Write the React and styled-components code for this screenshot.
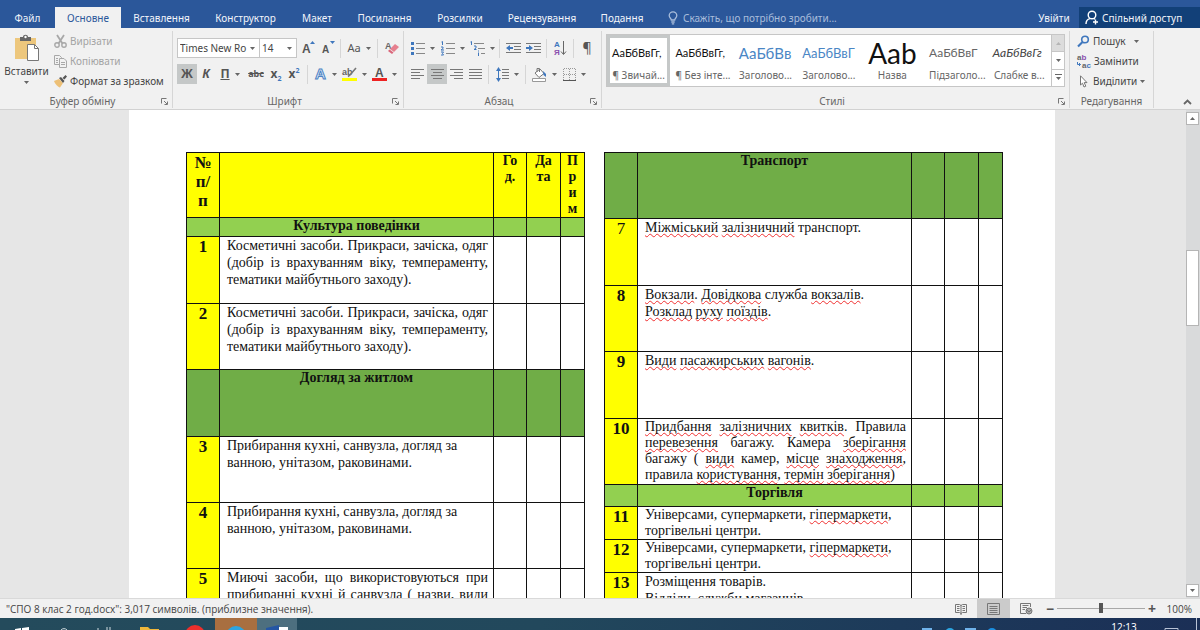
import React, { useState } from "react";
import styled, { createGlobalStyle, css } from "styled-components";

const GlobalStyle = createGlobalStyle`
  * {
    box-sizing: border-box;
  }
  body {
    margin: 0;
    overflow: hidden;
    font-family: "Noto Sans", "Open Sans", sans-serif;
    font-size: 10px;
    color: #444;
  }
  button, input, select {
    font: inherit;
    color: inherit;
    margin: 0;
    padding: 0;
    border: 0;
    background: none;
  }
  svg {
    flex: none;
    overflow: visible;
  }
`;

const Window = styled.div`
  display: flex;
  flex-direction: column;
  height: 100vh;
`;

/* ---------- title / tabs ---------- */

const TabBar = styled.header`
  display: flex;
  align-items: flex-end;
  flex: none;
  height: 28px;
  background: #2b579a;
  color: #f2f5fa;
`;

const Tab = styled.button`
  flex: none;
  width: ${(p) => p.$w}px;
  height: 21px;
  white-space: nowrap;
  ${(p) =>
    p.$active &&
    css`
      background: #f1f1f1;
      color: #2b579a;
    `}
`;

const Search = styled.label`
  display: flex;
  align-items: center;
  flex: 1;
  gap: 5px;
  height: 21px;
  padding-left: 12px;
  color: #a9bddb;

  input {
    flex: 1;
    min-width: 0;
    outline: none;
  }
  input::placeholder {
    color: #a9bddb;
    opacity: 1;
  }
`;

const Share = styled.button`
  display: flex;
  align-items: center;
  flex: none;
  gap: 3px;
  width: 121px;
  height: 21px;
  padding-left: 6px;
  background: #124078;
  white-space: nowrap;
`;

/* ---------- ribbon ---------- */

const Ribbon = styled.section`
  display: flex;
  flex: none;
  height: 82px;
  padding-top: 3px;
  background: #f1f1f1;
  border-bottom: 1px solid #d2d2d2;
`;

const Group = styled.div`
  display: flex;
  flex-direction: column;
  justify-content: space-between;
  flex: ${(p) => (p.$w ? "none" : "1")};
  width: ${(p) => (p.$w ? p.$w + "px" : "auto")};
  min-width: 0;
  height: 77px;
  padding: 0 4px;
  border-right: 1px solid #d6d6d6;
`;

const GroupFoot = styled.div`
  display: flex;
  align-items: center;
  height: 14px;
  line-height: 14px;
  color: #666;
  white-space: nowrap;

  span {
    flex: 1;
    text-align: center;
  }
  button {
    display: flex;
  }
`;

const ClipBody = styled.div`
  display: flex;
  gap: 5px;
`;

const PasteButton = styled.button`
  display: flex;
  flex-direction: column;
  align-items: center;
  gap: 2px;
  width: 45px;
  height: 60px;
  padding-top: 3px;
  line-height: 16px;
  white-space: nowrap;
`;

const Stack = styled.div`
  display: flex;
  flex-direction: column;
`;

const SmallButton = styled.button`
  display: flex;
  align-items: center;
  gap: 3px;
  height: 20px;
  white-space: nowrap;
  color: ${(p) => (p.$off ? "#a3a3a3" : "#444")};
`;

const Rows = styled.div`
  display: flex;
  flex-direction: column;
  gap: 6px;
  padding-top: 7px;
`;

const ToolRow = styled.div`
  display: flex;
  align-items: center;
  height: 20px;
`;

const Tool = styled.button`
  display: flex;
  align-items: center;
  justify-content: center;
  flex: none;
  gap: 5px;
  width: ${(p) => p.$w}px;
  height: 20px;
  background: ${(p) => (p.$active ? "#c5c8c8" : "none")};
`;

const Sep = styled.i`
  flex: none;
  width: 1px;
  height: 19px;
  margin: 0 ${(p) => p.$gap || 3}px;
  background: #d6d6d6;
`;

const Combo = styled.label`
  display: flex;
  align-items: center;
  flex: none;
  width: ${(p) => p.$w}px;
  height: 20px;
  padding: 0 4px 0 2px;
  background: #fff;
  border: 1px solid #c6c6c6;

  & + & {
    border-left: 0;
  }
  select {
    flex: 1;
    min-width: 0;
    appearance: none;
    outline: none;
  }
`;

const Glyph = styled.span`
  font-size: ${(p) => p.$size || 13}px;
  line-height: 16px;
  font-weight: ${(p) => (p.$bold ? 700 : 400)};
  font-style: ${(p) => (p.$italic ? "italic" : "normal")};
  text-decoration: ${(p) => p.$line || "none"};
  color: #555;

  sub, sup {
    font-size: 7px;
    line-height: 1px;
    color: #3f77bd;
  }
`;

/* ---------- styles gallery ---------- */

const Gallery = styled.div`
  display: flex;
  height: 53px;
  margin-top: 3px;
  background: #fff;
  border: 1px solid #c6c6c6;
`;

const StyleList = styled.div`
  display: flex;
  flex: 1;
  min-width: 0;
  overflow: hidden;
`;

const StyleItem = styled.button`
  display: flex;
  flex-direction: column;
  flex: 1 0 0;
  min-width: 0;
  height: 51px;
  padding: 0 2px;
  border: 3px solid ${(p) => (p.$active ? "#c5c8c8" : "transparent")};
`;

const Sample = styled.span`
  display: flex;
  align-items: center;
  justify-content: ${(p) => (p.$center ? "center" : "flex-start")};
  width: 100%;
  height: 30px;
  white-space: nowrap;
  font-family: Lato, "Noto Sans", sans-serif;
  font-size: ${(p) => p.$size || 11}px;
  line-height: 30px;
  font-style: ${(p) => (p.$italic ? "italic" : "normal")};
  color: ${(p) => p.$color || "#111"};
`;

const StyleName = styled.span`
  width: 100%;
  line-height: 14px;
  text-align: center;
  white-space: nowrap;
  color: #666;
`;

const GalleryScroll = styled.div`
  display: flex;
  flex-direction: column;
  width: 13px;

  button {
    display: flex;
    align-items: center;
    justify-content: center;
    flex: 1;
    border-left: 1px solid #c6c6c6;
    border-bottom: 1px solid #c6c6c6;
  }
  button:first-child {
    background: #dcdcdc;
  }
  button:last-child {
    border-bottom: 0;
  }
`;

const EditBody = styled(Stack)`
  padding-left: 3px;
`;

const Collapse = styled.button`
  display: flex;
  align-items: flex-end;
  justify-content: flex-end;
  flex: none;
  width: 46px;
  height: 77px;
  padding: 0 8px 3px 0;
`;

/* ---------- document ---------- */

const Workspace = styled.main`
  display: flex;
  flex: 1;
  min-height: 0;
  background: #e6e6e6;
`;

const Canvas = styled.div`
  display: flex;
  justify-content: center;
  flex: 1;
  padding-right: 2px;
  overflow: hidden;
`;

const Page = styled.article`
  display: flex;
  align-items: flex-start;
  gap: 19px;
  width: 926px;
  padding: 42px 52px 0 57px;
  background: #fff;
`;

const Grid = styled.table`
  flex: 1;
  table-layout: fixed;
  border-collapse: collapse;
  font-family: "Liberation Serif", "Times New Roman", serif;
  font-size: 14px;
  line-height: 16px;
  color: #111;

  td, th {
    padding: 0;
    border: 1px solid #111;
    vertical-align: top;
    font-weight: 700;
    text-align: center;
  }
`;

const Row = styled.tr`
  height: ${(p) => p.$h}px;
  background: ${(p) => p.$bg || "#fff"};
`;

const Num = styled.td`
  && {
    background: #ff0;
    font-size: 17px;
    line-height: 19px;
    font-weight: ${(p) => (p.$light ? 400 : 700)};
  }
`;

const Body = styled.td`
  && {
    padding: 0 5px 0 7px;
    line-height: ${(p) => (p.$tight ? 16 : 17)}px;
    font-weight: 400;
    text-align: left;
  }
`;

const Line = styled.div`
  white-space: nowrap;
  text-align-last: ${(p) => (p.$fill ? "justify" : "left")};
`;

const Err = styled.span`
  text-decoration: underline wavy #f03030 1px;
  text-underline-offset: 1px;
  text-decoration-skip-ink: none;
`;

const Scroll = styled.div`
  display: flex;
  flex-direction: column;
  align-items: stretch;
  flex: none;
  width: 14px;
  padding: 2px 1px 1px 0;
  background: #d9dadb;

  button {
    display: flex;
    align-items: center;
    justify-content: center;
    height: 13px;
    background: #fff;
    border: 1px solid #b5b5b5;
  }
`;

const ScrollTrack = styled.div`
  flex: 1;
  padding-top: 125px;
`;

const ScrollThumb = styled.div`
  height: 76px;
  background: #fff;
  border: 1px solid #b5b5b5;
`;

/* ---------- status bar and taskbar ---------- */

const StatusBar = styled.footer`
  display: flex;
  align-items: center;
  flex: none;
  height: 20px;
  padding: 0 8px 0 6px;
  background: #f1f1f1;
  border-top: 1px solid #d9d9d9;
  white-space: nowrap;
  font-family: "Open Sans", "Noto Sans", sans-serif;

  p {
    flex: 1;
    margin: 0;
  }
`;

const ViewButton = styled.button`
  display: flex;
  align-items: center;
  justify-content: center;
  width: 33px;
  height: 19px;
  background: ${(p) => (p.$active ? "#cbcbcb" : "none")};
`;

const ZoomStep = styled.button`
  width: 14px;
  font-size: 14px;
  line-height: 16px;
  font-weight: 700;
  color: #555;
`;

const ZoomSlider = styled.input`
  appearance: none;
  width: 88px;
  height: 12px;
  outline: none;

  &::-webkit-slider-runnable-track {
    height: 1px;
    background: #a8a8a8;
  }
  &::-webkit-slider-thumb {
    appearance: none;
    width: 4px;
    height: 10px;
    margin-top: -5px;
    background: #555;
  }
`;

const ZoomValue = styled.span`
  width: 33px;
  text-align: right;
`;

const Taskbar = styled.nav`
  display: flex;
  flex: none;
  height: 12px;
  overflow: hidden;
  background: linear-gradient(90deg, #244b5c 0%, #22485c 45%, #1d3a5a 75%, #1b2f56 100%);
  color: #fff;
`;

const TaskItem = styled.button`
  display: flex;
  align-items: flex-start;
  justify-content: center;
  flex: none;
  width: ${(p) => p.$w}px;
  height: 12px;
  background: ${(p) => p.$bg || "none"};
`;

const Tray = styled.div`
  display: flex;
  justify-content: flex-end;
  flex: 1;
`;

const Clock = styled.time`
  width: 64px;
  padding-top: 1px;
  font-size: 10px;
  line-height: 16px;
  text-align: center;
`;

/* ---------- icons ---------- */

const Caret = ({ up, light }) => (
  <svg width="5" height="3" viewBox="0 0 5 3">
    <path d={up ? "M0 3L2.5 0L5 3Z" : "M0 0L2.5 3L5 0Z"} fill={light ? "#b5b5b5" : "#666"} />
  </svg>
);

const MoreCaret = () => (
  <svg width="7" height="7" viewBox="0 0 7 7">
    <path d="M0 .5H7" stroke="#666" />
    <path d="M1 3L3.5 6L6 3Z" fill="#666" />
  </svg>
);

const Launcher = () => (
  <svg width="7" height="7" viewBox="0 0 7 7" fill="none" stroke="#777">
    <path d="M.5 5.5V.5H5.5M3 3L6 6M6.5 3.5V6.5H3.5" />
  </svg>
);

const BulbIcon = () => (
  <svg width="10" height="14" viewBox="0 0 10 14" fill="none" stroke="#a9bddb" strokeWidth="1.3">
    <path d="M3.3 9C3.3 7.5 1.2 6.8 1.2 4.4A3.8 3.6 0 0 1 8.8 4.4C8.8 6.8 6.7 7.5 6.7 9ZM3.3 11H6.7M3.8 12.8H6.2" />
  </svg>
);

const PersonIcon = () => (
  <svg width="14" height="15" viewBox="0 0 14 15" fill="none" stroke="#fff" strokeWidth="1.4">
    <circle cx="7" cy="5" r="3.8" />
    <path d="M1 14C1 11 3 9 5 8.6M9 8.5L10 9M10.5 9.5V14.5M8 12H13" />
  </svg>
);

const PasteIcon = () => (
  <svg width="26" height="27" viewBox="0 0 26 27">
    <path d="M1 4H22V25H1Z" fill="#edc77d" />
    <path d="M6 3H9C9 0 14 0 14 3H17V7H6Z" fill="#666" />
    <circle cx="11.5" cy="3" r="1.2" fill="#fff" />
    <path d="M13.5 10.5H20.5L24.5 14.5V26.5H13.5Z" fill="#fff" stroke="#777" />
    <path d="M20.5 10.5V14.5H24.5" fill="none" stroke="#777" />
  </svg>
);

const CutIcon = () => (
  <svg width="13" height="13" viewBox="0 0 13 13" fill="none" stroke="#a8a8a8" strokeWidth="1.4">
    <path d="M3 0L8.5 8.5M10 0L4.5 8.5" strokeWidth="1.8" />
    <circle cx="3" cy="10" r="2.2" />
    <circle cx="10" cy="10" r="2.2" />
  </svg>
);

const CopyIcon = () => (
  <svg width="13" height="13" viewBox="0 0 13 13" fill="#f1f1f1" stroke="#a8a8a8">
    <path d="M.5.5H5.5L7.5 2.5V9.5H.5ZM2 3.5H4M2 5.5H4M2 7.5H4" />
    <path d="M5.5 3.5H10L12.5 6V12.5H5.5ZM7 7.5H11M7 9.5H11" />
  </svg>
);

const BrushIcon = () => (
  <svg width="13" height="13" viewBox="0 0 13 13">
    <path d="M0 6L5 4L9 8L6 12.5C4 12 1 9 0 6Z" fill="#edc077" />
    <path d="M5 3L7 2L10.5 6L9 8ZM8.5 3L11.5 0L13 1.5L10.5 4.5Z" fill="#555" />
  </svg>
);

const LetterSvg = styled.svg`
  font-family: "Liberation Sans", sans-serif;
`;

const GrowIcon = ({ down }) => (
  <LetterSvg width="13" height="16" viewBox="0 0 13 16">
    <text x="0" y="13" fontSize={down ? 10 : 12} fontWeight="600" fill="#555">A</text>
    <path d={down ? "M8 1H13L10.5 4Z" : "M8 4H13L10.5 1Z"} fill="#3f77bd" />
  </LetterSvg>
);

const EraserIcon = () => (
  <LetterSvg width="14" height="16" viewBox="0 0 14 16">
    <text x="0" y="9" fontSize="9" fontWeight="600" fill="#666">A</text>
    <path d="M10 4L14 7L9 12L5 9Z" fill="#e6808f" />
    <path d="M4.5 9.5L8.5 12.5L7 14L3 11Z" fill="#d9667a" />
  </LetterSvg>
);

const OutlineAIcon = () => (
  <LetterSvg width="13" height="18" viewBox="0 0 13 18">
    <text
      x="1"
      y="14"
      fontSize="15"
      fontWeight="700"
      fill="#e8f1fb"
      stroke="#4c82c3"
      strokeWidth="1"
    >
      A
    </text>
  </LetterSvg>
);

const HighlightIcon = () => (
  <LetterSvg width="15" height="16" viewBox="0 0 15 16">
    <text x="0" y="9" fontSize="9" fontWeight="700" fill="#666">ab</text>
    <path d="M14 2L8 9L6 10.5" stroke="#777" strokeWidth="1.6" fill="none" />
    <path d="M0 12H15V15H0Z" fill="#ffff00" />
  </LetterSvg>
);

const ColorIcon = () => (
  <LetterSvg width="15" height="16" viewBox="0 0 15 16">
    <text x="3" y="11" fontSize="12" fontWeight="700" fill="#555">A</text>
    <path d="M0 12H15V15H0Z" fill="#ee2222" />
  </LetterSvg>
);

const ListIcon = ({ kind }) => (
  <svg width="14" height="15" viewBox="0 0 14 15">
    {kind === "dots" &&
      [2, 7, 12].map((y) => <rect key={y} x="0" y={y - 1} width="3" height="3" fill="#3f77bd" />)}
    {kind === "nums" && (
      <path d="M.5 1L1.5.5V4M0 6H2V7.5L0 9H3M0 11H2.5L1.5 12.5L2.5 14H0" stroke="#3f77bd" fill="none" />
    )}
    <path d="M5 2.5H14M5 7.5H14M5 12.5H14" stroke="#888" />
  </svg>
);

const MultiIcon = () => (
  <svg width="15" height="15" viewBox="0 0 15 15" fill="none">
    <path d="M.5 1L1.5.5V4M4 5H6V7L4 8.5H6.5M8.5 9.5V10.5M8.5 11.5V15" stroke="#3f77bd" />
    <path d="M4 2.5H14M8 7.5H15M11 12.5H15" stroke="#888" />
  </svg>
);

const IndentIcon = ({ right }) => (
  <svg width="15" height="13" viewBox="0 0 15 13">
    <path d="M0 1.5H15M8 4.5H15M8 7.5H15M0 10.5H15" stroke="#777" />
    <path
      d={right ? "M0 5H3V3L7 6L3 9V7H0Z" : "M7 5H4V3L0 6L4 9V7H7Z"}
      fill="#3f77bd"
    />
  </svg>
);

const SortIcon = () => (
  <LetterSvg width="13" height="18" viewBox="0 0 13 18" fontSize="8" fontWeight="700">
    <text x="0" y="8" fill="#3f77bd">А</text>
    <text x="0" y="16" fill="#8a4fae">Я</text>
    <path d="M9.5 2V15M7 12.5L9.5 15.5L12 12.5" fill="none" stroke="#666" />
  </LetterSvg>
);

const AlignIcon = ({ kind }) => {
  const d = {
    left: "M0 .5H13M0 3.5H9M0 6.5H13M0 9.5H9",
    center: "M0 .5H13M2 3.5H11M0 6.5H13M2 9.5H11",
    right: "M0 .5H13M4 3.5H13M0 6.5H13M4 9.5H13",
    full: "M0 .5H13M0 3.5H13M0 6.5H13M0 9.5H13",
  };
  return (
    <svg width="13" height="10" viewBox="0 0 13 10">
      <path d={d[kind]} stroke="#777" />
    </svg>
  );
};

const SpacingIcon = () => (
  <svg width="13" height="15" viewBox="0 0 13 15">
    <path d="M2.5 3V12" stroke="#3f77bd" />
    <path d="M0 4L2.5 0L5 4ZM0 11L2.5 15L5 11Z" fill="#3f77bd" />
    <path d="M6 2.5H13M6 5.5H13M6 8.5H13M6 11.5H13" stroke="#777" />
  </svg>
);

const BucketIcon = () => (
  <svg width="15" height="15" viewBox="0 0 15 15">
    <path d="M3 6L8 2L12 6.5L7 10.5Z" fill="#fff" stroke="#777" />
    <path d="M5 5V1.5H7.5V5" fill="none" stroke="#777" />
    <path d="M11 4L14 7V10L11.5 8Z" fill="#3f77bd" />
    <path d="M.5 11.5H13.5V14.5H.5Z" fill="#fff" stroke="#999" />
  </svg>
);

const BordersIcon = () => (
  <svg width="13" height="13" viewBox="0 0 13 13" fill="none">
    <path d="M.5 12V.5H12.5V12M6.5 1V12M1 6.5H12" stroke="#999" strokeDasharray="1 1" />
    <path d="M0 12.5H13" stroke="#555" />
  </svg>
);

const FindIcon = () => (
  <svg width="13" height="13" viewBox="0 0 13 13" fill="none" stroke="#3f77bd">
    <circle cx="8" cy="4.5" r="3.3" strokeWidth="1.6" />
    <path d="M5.5 7L1 11.5" strokeWidth="2.2" />
  </svg>
);

const ReplaceIcon = () => (
  <LetterSvg width="14" height="18" viewBox="0 0 14 18" fontWeight="700" fontSize="8">
    <text x="0" y="8" fill="#666">a<tspan fill="#8a4fae">b</tspan></text>
    <text x="5" y="16" fill="#666">a<tspan fill="#3f77bd">c</tspan></text>
    <path d="M.5 10V12.5H3.5M2 11L3.5 12.5L2 14" fill="none" stroke="#3f77bd" />
  </LetterSvg>
);

const PointerIcon = () => (
  <svg width="13" height="13" viewBox="0 0 13 13">
    <path d="M3.5.8V10L5.5 8.2L7 12L8.8 11.2L7.2 7.6H10Z" fill="#fff" stroke="#777" />
  </svg>
);

const ReadIcon = () => (
  <svg width="12" height="12" viewBox="0 0 12 12" fill="none" stroke="#777">
    <path d="M.5 1.5H4.5L6 2.5L7.5 1.5H11.5V9.5H7.5L6 10.5L4.5 9.5H.5ZM6 2V12M2 3.5H4.5M2 5.5H4.5M2 7.5H4.5M7.5 3.5H10M7.5 5.5H10M7.5 7.5H10" />
  </svg>
);

const PrintIcon = () => (
  <svg width="13" height="12" viewBox="0 0 13 12" fill="none" stroke="#777">
    <path d="M.5.5H12.5V11.5H.5ZM2.5 3.5H10.5M2.5 5.5H10.5M2.5 7.5H10.5M2.5 9.5H10.5" />
  </svg>
);

const WebIcon = () => (
  <svg width="13" height="12" viewBox="0 0 13 12" fill="none" stroke="#777">
    <path d="M6 10.5H.5V.5H10.5V4M2.5 2.5H8.5M2.5 4.5H7M2.5 6.5H5" />
    <circle cx="9" cy="8" r="3" fill="#aaa" />
    <path d="M7 7L9 9L11 7" />
  </svg>
);

/* ---------- data ---------- */

const tabs = [
  ["Файл", 55],
  ["Основне", 66],
  ["Вставлення", 81],
  ["Конструктор", 87],
  ["Макет", 56],
  ["Посилання", 79],
  ["Розсилки", 72],
  ["Рецензування", 92],
  ["Подання", 68],
];

const gallery = [
  { name: "¶ Звичай...", text: "АаБбВвГг,", active: true },
  { name: "¶ Без інте...", text: "АаБбВвГг," },
  { name: "Заголово...", text: "АаБбВв", size: 15, color: "#4a86c5" },
  { name: "Заголово...", text: "АаБбВвГ", size: 13, color: "#4a86c5" },
  { name: "Назва", text: "Ааb", size: 28, center: true },
  { name: "Підзаголо...", text: "АаБбВвГ", size: 12, color: "#666" },
  { name: "Слабке в...", text: "АаБбВвГг", size: 12, color: "#444", italic: true },
];

const YELLOW = "#ffff00";
const GREEN = "#70ad47";
const LIME = "#92d050";

const Col = styled.col`
  width: ${(p) => p.$w}px;
`;

const Cols = () => (
  <colgroup>
    <Col $w={33} />
    <col />
    <Col $w={33} />
    <Col $w={34} />
    <Col $w={24} />
  </colgroup>
);

const Empty = () => (
  <>
    <td />
    <td />
    <td />
  </>
);

const Section = ({ title, h, bg }) => (
  <Row $h={h} $bg={bg}>
    <td />
    <th>{title}</th>
    <Empty />
  </Row>
);

const Lesson = ({ n, h, light, tight, children }) => (
  <Row $h={h}>
    <Num $light={light}>{n}</Num>
    <Body $tight={tight}>{children}</Body>
    <Empty />
  </Row>
);

const Foot = ({ children, launcher = true }) => (
  <GroupFoot>
    <span>{children}</span>
    {launcher && (
      <button aria-label={children}>
        <Launcher />
      </button>
    )}
  </GroupFoot>
);

const LeftTable = () => (
  <Grid>
    <Cols />
    <tbody>
      <Row $h={65} $bg={YELLOW}>
        <Num>№<br />п/<br />п</Num>
        <th />
        <th>Го<br />д.</th>
        <th>Да<br />та</th>
        <th>П<br />р<br />и<br />м</th>
      </Row>
      <Section title="Культура поведінки" h={19} bg={LIME} />
      {[1, 2].map((n) => (
        <Lesson key={n} n={n} h={n === 1 ? 67 : 66}>
          <Line $fill>Косметичні засоби. Прикраси, зачіска, одяг</Line>
          <Line $fill>(добір із врахуванням віку, темпераменту,</Line>
          <Line>тематики майбутнього заходу).</Line>
        </Lesson>
      ))}
      <Section title="Догляд за житлом" h={67} bg={GREEN} />
      {[3, 4].map((n) => (
        <Lesson key={n} n={n} h={66}>
          <Line>Прибирання кухні, санвузла, догляд за</Line>
          <Line>ванною, унітазом, раковинами.</Line>
        </Lesson>
      ))}
      <Lesson n={5} h={66}>
        <Line $fill>Миючі засоби, що використовуються при</Line>
        <Line $fill>прибиранні кухні й санвузла ( назви, види</Line>
      </Lesson>
    </tbody>
  </Grid>
);

const RightTable = () => (
  <Grid>
    <Cols />
    <tbody>
      <Section title="Транспорт" h={66} bg={GREEN} />
      <Lesson n={7} h={67} light>
        <Line><Err>Міжміський</Err> <Err>залізничний</Err> транспорт.</Line>
      </Lesson>
      <Lesson n={8} h={66}>
        <Line><Err>Вокзали</Err>. <Err>Довідкова</Err> служба <Err>вокзалів</Err>.</Line>
        <Line><Err>Розклад</Err> <Err>руху</Err> <Err>поїздів</Err>.</Line>
      </Lesson>
      <Lesson n={9} h={67}>
        <Line><Err>Види</Err> <Err>пасажирських</Err> <Err>вагонів</Err>.</Line>
      </Lesson>
      <Lesson n={10} h={66} tight>
        <Line $fill><Err>Придбання</Err> <Err>залізничних</Err> <Err>квитків</Err>. Правила</Line>
        <Line $fill><Err>перевезення</Err> багажу. Камера <Err>зберігання</Err></Line>
        <Line $fill>багажу ( <Err>види</Err> камер, <Err>місце</Err> <Err>знаходження</Err>,</Line>
        <Line>правила <Err>користування</Err>, <Err>термін</Err> <Err>зберігання</Err>)</Line>
      </Lesson>
      <Section title="Торгівля" h={22} bg={LIME} />
      {[11, 12].map((n) => (
        <Lesson key={n} n={n} h={33} tight>
          <Line>Універсами, супермаркети, <Err>гіпермаркети</Err>,</Line>
          <Line>торгівельні центри.</Line>
        </Lesson>
      ))}
      <Lesson n={13} h={66}>
        <Line>Розміщення товарів.</Line>
        <Line>Відділи, служби магазинів.</Line>
      </Lesson>
    </tbody>
  </Grid>
);

const App = () => {
  const [tab, setTab] = useState("Основне");
  const [zoom, setZoom] = useState(50);

  return (
    <Window>
      <GlobalStyle />
      <TabBar>
        {tabs.map(([name, w]) => (
          <Tab key={name} $w={w} $active={name === tab} onClick={() => setTab(name)}>
            {name}
          </Tab>
        ))}
        <Search>
          <BulbIcon />
          <input aria-label="Пошук команд" placeholder="Скажіть, що потрібно зробити..." />
        </Search>
        <Tab $w={50}>Увійти</Tab>
        <Share>
          <PersonIcon />
          Спільний доступ
        </Share>
      </TabBar>

      <Ribbon>
        <Group $w={173}>
          <ClipBody>
            <PasteButton>
              <PasteIcon />
              Вставити
              <Caret />
            </PasteButton>
            <Stack>
              <SmallButton $off><CutIcon />Вирізати</SmallButton>
              <SmallButton $off><CopyIcon />Копіювати</SmallButton>
              <SmallButton><BrushIcon />Формат за зразком</SmallButton>
            </Stack>
          </ClipBody>
          <Foot>Буфер обміну</Foot>
        </Group>

        <Group $w={231}>
          <Rows>
            <ToolRow>
              <Combo $w={83}>
                <select aria-label="Шрифт"><option>Times New Ro</option></select>
                <Caret />
              </Combo>
              <Combo $w={37}>
                <select aria-label="Розмір"><option>14</option></select>
                <Caret />
              </Combo>
              <Tool $w={22}><GrowIcon /></Tool>
              <Tool $w={18}><GrowIcon down /></Tool>
              <Sep />
              <Tool $w={30}><Glyph $size={11}>Aa</Glyph><Caret /></Tool>
              <Sep />
              <Tool $w={22}><EraserIcon /></Tool>
            </ToolRow>
            <ToolRow>
              <Tool $w={20} $active><Glyph $bold $size={12}>Ж</Glyph></Tool>
              <Tool $w={18}><Glyph $bold $italic $size={12}>К</Glyph></Tool>
              <Tool $w={30}><Glyph $bold $size={12} $line="underline">П</Glyph><Caret /></Tool>
              <Tool $w={22}><Glyph $bold $size={9} $line="line-through">abc</Glyph></Tool>
              <Tool $w={18}><Glyph $bold $size={12}>x<sub>2</sub></Glyph></Tool>
              <Tool $w={18}><Glyph $bold $size={12}>x<sup>2</sup></Glyph></Tool>
              <Sep $gap={4} />
              <Tool $w={27}><OutlineAIcon /><Caret /></Tool>
              <Tool $w={31}><HighlightIcon /><Caret /></Tool>
              <Tool $w={28}><ColorIcon /><Caret /></Tool>
            </ToolRow>
          </Rows>
          <Foot>Шрифт</Foot>
        </Group>

        <Group $w={198}>
          <Rows>
            <ToolRow>
              <Tool $w={30}><ListIcon kind="dots" /><Caret /></Tool>
              <Tool $w={30}><ListIcon kind="nums" /><Caret /></Tool>
              <Tool $w={28}><MultiIcon /><Caret /></Tool>
              <Sep />
              <Tool $w={20}><IndentIcon /></Tool>
              <Tool $w={20}><IndentIcon right /></Tool>
              <Sep />
              <Tool $w={20}><SortIcon /></Tool>
              <Sep />
              <Tool $w={20}><Glyph $size={14}>¶</Glyph></Tool>
            </ToolRow>
            <ToolRow>
              <Tool $w={19}><AlignIcon kind="left" /></Tool>
              <Tool $w={20} $active><AlignIcon kind="center" /></Tool>
              <Tool $w={19}><AlignIcon kind="right" /></Tool>
              <Tool $w={19}><AlignIcon kind="full" /></Tool>
              <Sep />
              <Tool $w={30}><SpacingIcon /><Caret /></Tool>
              <Sep />
              <Tool $w={30}><BucketIcon /><Caret /></Tool>
              <Tool $w={30}><BordersIcon /><Caret /></Tool>
            </ToolRow>
          </Rows>
          <Foot>Абзац</Foot>
        </Group>

        <Group>
          <Gallery>
            <StyleList>
              {gallery.map((s, i) => (
                <StyleItem key={i} $active={s.active}>
                  <Sample $size={s.size} $color={s.color} $italic={s.italic} $center={s.center}>
                    {s.text}
                  </Sample>
                  <StyleName>{s.name}</StyleName>
                </StyleItem>
              ))}
            </StyleList>
            <GalleryScroll>
              <button aria-label="Вгору"><Caret up light /></button>
              <button aria-label="Вниз"><Caret /></button>
              <button aria-label="Додатково"><MoreCaret /></button>
            </GalleryScroll>
          </Gallery>
          <Foot>Стилі</Foot>
        </Group>

        <Group $w={84}>
          <EditBody>
            <SmallButton><FindIcon />Пошук&nbsp;&nbsp;<Caret /></SmallButton>
            <SmallButton><ReplaceIcon />Замінити</SmallButton>
            <SmallButton><PointerIcon />Виділити<Caret /></SmallButton>
          </EditBody>
          <Foot launcher={false}>Редагування</Foot>
        </Group>
        <Collapse aria-label="Згорнути стрічку">
          <svg width="9" height="6" viewBox="0 0 9 6" fill="none" stroke="#666" strokeWidth="1.8">
            <path d="M1 5L4.5 1.5L8 5" />
          </svg>
        </Collapse>
      </Ribbon>

      <Workspace>
        <Canvas>
          <Page>
            <LeftTable />
            <RightTable />
          </Page>
        </Canvas>
        <Scroll>
          <button aria-label="Прокрутити вгору"><Caret up /></button>
          <ScrollTrack>
            <ScrollThumb />
          </ScrollTrack>
          <button aria-label="Прокрутити вниз"><Caret /></button>
        </Scroll>
      </Workspace>

      <StatusBar>
        <p>"СПО 8 клас 2 год.docx": 3,017 символів. (приблизне значення).</p>
        <ViewButton aria-label="Читання"><ReadIcon /></ViewButton>
        <ViewButton aria-label="Розмітка" $active><PrintIcon /></ViewButton>
        <ViewButton aria-label="Вебдокумент"><WebIcon /></ViewButton>
        <ZoomStep>−</ZoomStep>
        <ZoomSlider
          type="range"
          aria-label="Масштаб"
          value={zoom}
          onChange={(e) => setZoom(e.target.value)}
        />
        <ZoomStep>+</ZoomStep>
        <ZoomValue>100%</ZoomValue>
      </StatusBar>

      <Taskbar>
        <TaskItem $w={44} aria-label="Пуск">
          <svg width="14" height="12" viewBox="0 0 14 12"><path d="M0 11L6 10V12H0ZM7 10L14 9V12H7Z" fill="#fff" /></svg>
        </TaskItem>
        <TaskItem $w={82} aria-label="Пошук">
          <svg width="60" height="12" viewBox="0 0 60 12"><path d="M6 12A4 4 0 0 1 12 12M43 12V10M52 12V9M55 12V9" fill="none" stroke="#cfdade" /></svg>
        </TaskItem>
        <TaskItem $w={48} aria-label="Провідник">
          <svg width="20" height="12" viewBox="0 0 20 12"><path d="M0 9H8L10 11H19V12H0Z" fill="#f0b73a" /></svg>
        </TaskItem>
        <TaskItem $w={41} aria-label="Браузер">
          <svg width="20" height="12" viewBox="0 0 20 12"><circle cx="10" cy="17" r="10" fill="#ee2f2c" /></svg>
        </TaskItem>
        <TaskItem $w={42} $bg="#a86f40" aria-label="Месенджер">
          <svg width="20" height="12" viewBox="0 0 20 12"><circle cx="10" cy="18" r="10" fill="#2ca5e0" /></svg>
        </TaskItem>
        <TaskItem $w={40} $bg="#4d6f7f" aria-label="Word">
          <svg width="22" height="12" viewBox="0 0 22 12">
            <path d="M12 9H22V12H12Z" fill="#fff" />
            <path d="M0 10L13 7V12H0Z" fill="#2456a4" />
          </svg>
        </TaskItem>
        <Tray>
          <svg width="170" height="12" viewBox="0 0 170 12">
            <path d="M0 10H10V12H0ZM43 10H54V12H43Z" fill="#6fb2ea" />
            <circle cx="28" cy="15" r="5" fill="#2ca5e0" />
            <circle cx="70" cy="15" r="5" fill="#1b8fe0" />
          </svg>
          <Clock>12:13</Clock>
          <svg width="44" height="12" viewBox="0 0 44 12">
            <path d="M9 12V10.5H22V12M40.5 0V12" fill="none" stroke="#b9c3d6" />
          </svg>
        </Tray>
      </Taskbar>
    </Window>
  );
};

export default App;
